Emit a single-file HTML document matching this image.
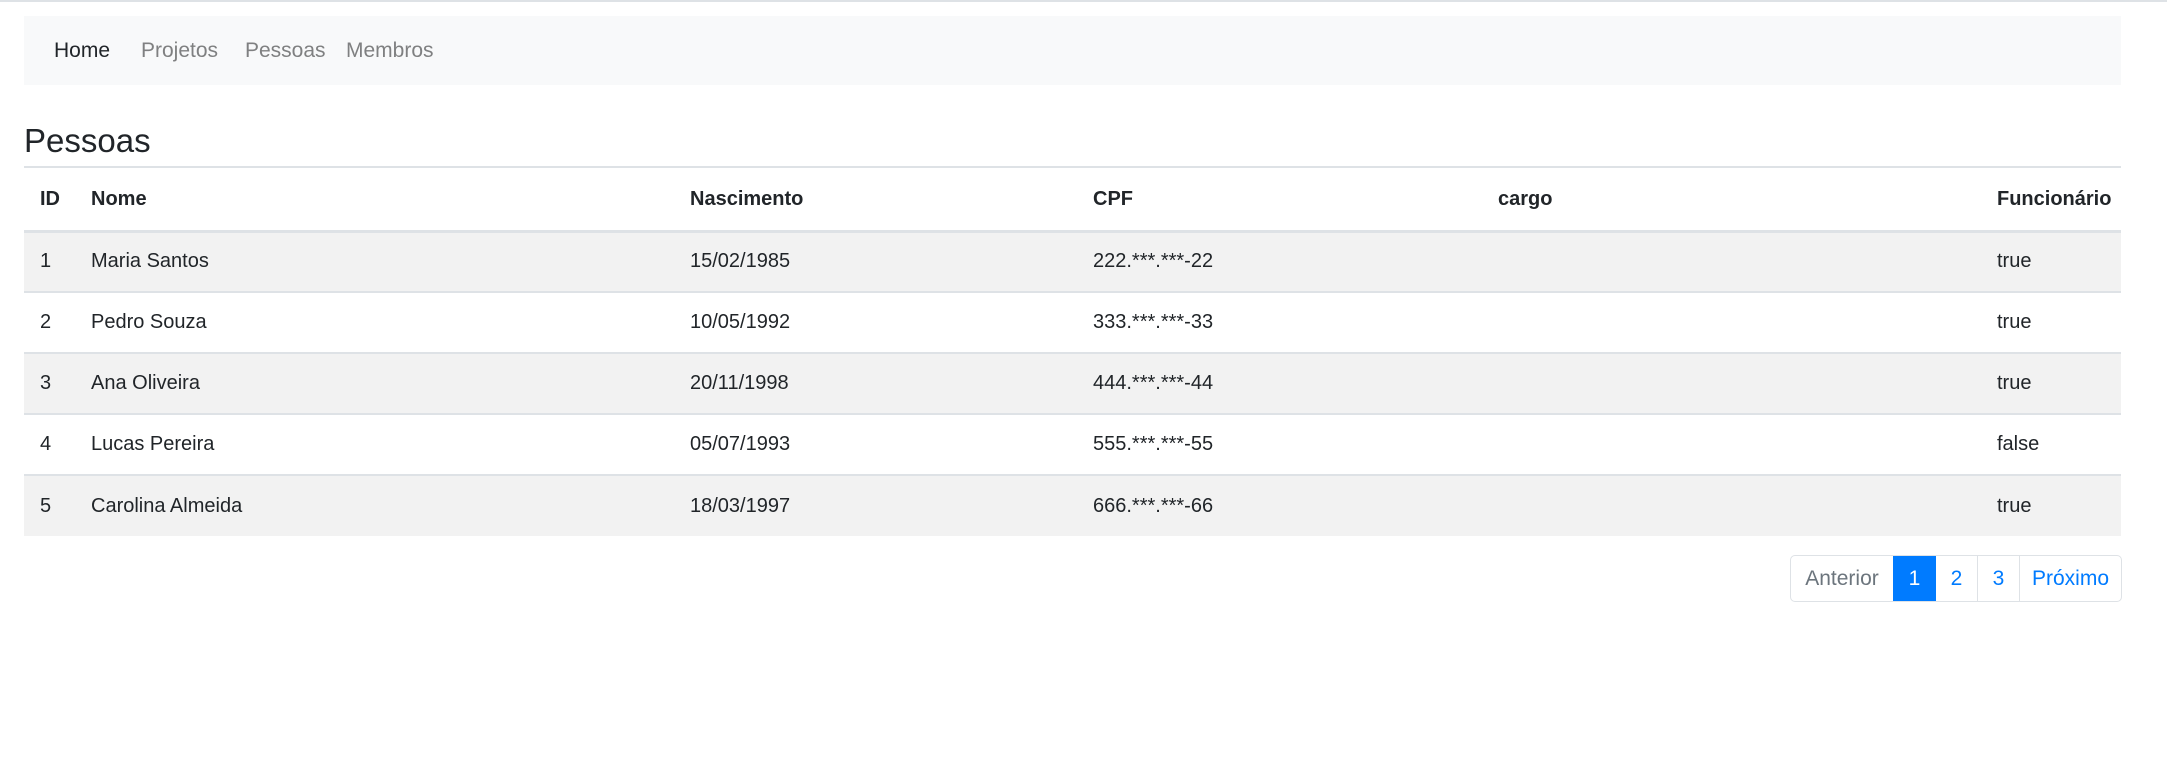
<!DOCTYPE html>
<html><head><meta charset="utf-8"><style>
*{box-sizing:border-box;margin:0;padding:0}
body{width:2167px;height:763px;background:#fff;font-family:"Liberation Sans",sans-serif;color:#212529;border-top:2px solid #dee2e6;position:relative;overflow:hidden}
.nav{position:absolute;left:24px;top:14px;width:2097px;height:69px;background:#f8f9fa}
.nav span{position:absolute;top:23px;font-size:21px;color:#7f8081}
h1{position:absolute;left:24px;top:119px;font-size:33px;font-weight:500;line-height:40px}
table{position:absolute;left:24px;top:164px;width:2097px;border-collapse:collapse;font-size:20px;border-top:2px solid #dee2e6}
th,td{height:61px;padding:0;vertical-align:middle;text-align:left;white-space:nowrap}
th{font-weight:bold;border-bottom:3px solid #dee2e6;height:64px;padding-top:2px}
td{border-bottom:2px solid #dee2e6}
tr.s td{background:#f2f2f2}
tr:last-child td{border-bottom:none}
.pg{position:absolute;top:553px;left:1790px;height:47px;display:flex;border:1.5px solid #dee2e6;border-radius:5px;overflow:hidden;font-size:21px}
.pg div{display:flex;align-items:center;justify-content:center;color:#007bff;border-left:1.5px solid #dee2e6}
</style></head><body>
<div class="nav">
<span style="left:30px;color:#212529">Home</span>
<span style="left:117px">Projetos</span>
<span style="left:221px">Pessoas</span>
<span style="left:322px">Membros</span>
</div>
<h1>Pessoas</h1>
<table>
<colgroup><col style="width:67px"><col style="width:599px"><col style="width:403px"><col style="width:405px"><col style="width:499px"><col></colgroup>
<tr><th style="padding-left:16px">ID</th><th>Nome</th><th>Nascimento</th><th>CPF</th><th>cargo</th><th>Funcionário</th></tr>
<tr class="s"><td style="padding-left:16px">1</td><td>Maria Santos</td><td>15/02/1985</td><td>222.***.***-22</td><td></td><td>true</td></tr>
<tr><td style="padding-left:16px">2</td><td>Pedro Souza</td><td>10/05/1992</td><td>333.***.***-33</td><td></td><td>true</td></tr>
<tr class="s"><td style="padding-left:16px">3</td><td>Ana Oliveira</td><td>20/11/1998</td><td>444.***.***-44</td><td></td><td>true</td></tr>
<tr><td style="padding-left:16px">4</td><td>Lucas Pereira</td><td>05/07/1993</td><td>555.***.***-55</td><td></td><td>false</td></tr>
<tr class="s"><td style="padding-left:16px">5</td><td>Carolina Almeida</td><td>18/03/1997</td><td>666.***.***-66</td><td></td><td>true</td></tr>
</table>
<div class="pg">
<div style="width:102px;color:#6c757d;border-left:none">Anterior</div>
<div style="width:43px;background:#007bff;color:#fff;border-left:none">1</div>
<div style="width:41px;border-left:none">2</div>
<div style="width:42px">3</div>
<div style="width:102px">Próximo</div>
</div>
</body></html>
